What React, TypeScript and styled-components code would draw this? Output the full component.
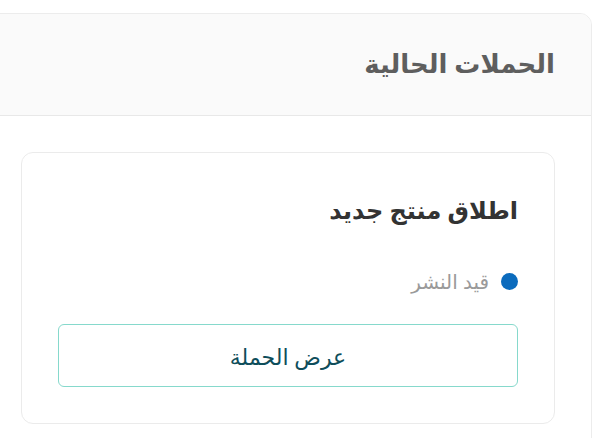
import React from "react";
import styled, { createGlobalStyle } from "styled-components";

const Global = createGlobalStyle`
  html, body { margin: 0; padding: 0; background: #ffffff; }
  body {
    direction: rtl;
    font-family: "Noto Sans", "DejaVu Sans", sans-serif;
    overflow: hidden;
  }
`;

const Page = styled.div`
  width: 604px;
  height: 438px;
  overflow: hidden;
  padding-top: 13px;
  box-sizing: border-box;
  display: flex;
  justify-content: flex-start;
`;

const Panel = styled.section`
  flex: 0 0 700px;
  margin-right: 12px;
  border: 1px solid #ececec;
  border-radius: 12px;
  background: #ffffff;
  height: 600px;
  overflow: hidden;
`;

const PanelHeader = styled.header`
  height: 101px;
  background: #fafafa;
  border-bottom: 1px solid #e8e8e8;
  display: flex;
  align-items: center;
  padding-right: 36px;
`;

const PanelTitle = styled.h2`
  margin: 0 0 4px;
  font-size: 26px;
  font-weight: 700;
  color: #5e5e5e;
`;

const Body = styled.div`
  padding: 36px 36px 0 0;
  display: flex;
`;

const Card = styled.article`
  width: 534px;
  height: 272px;
  box-sizing: border-box;
  border: 1px solid #ebebeb;
  border-radius: 12px;
  padding: 36px 36px 0;
  display: flex;
  flex-direction: column;
`;

const CardTitle = styled.h3`
  margin: 0;
  font-size: 24px;
  font-weight: 700;
  color: #333333;
  line-height: 42px;
`;

const Status = styled.div`
  display: flex;
  align-items: center;
  gap: 12px;
  margin-top: 38px;
  height: 24px;
`;

const Dot = styled.span<{ $color: string }>`
  width: 17px;
  height: 17px;
  border-radius: 50%;
  background: ${(p) => p.$color};
  flex: 0 0 auto;
`;

const StatusText = styled.span`
  font-size: 20px;
  color: #9a9a9a;
`;

const ViewButton = styled.button`
  margin-top: 31px;
  height: 63px;
  width: 100%;
  border: 1px solid #86d9cc;
  border-radius: 6px;
  background: #ffffff;
  color: #0e4d5a;
  font-family: inherit;
  font-size: 22px;
  cursor: pointer;
`;

export default function App() {
  return (
    <>
      <Global />
      <Page>
        <Panel>
          <PanelHeader>
            <PanelTitle>الحملات الحالية</PanelTitle>
          </PanelHeader>
          <Body>
            <Card>
              <CardTitle>اطلاق منتج جديد</CardTitle>
              <Status>
                <Dot $color="#0b6bbd" />
                <StatusText>قيد النشر</StatusText>
              </Status>
              <ViewButton>عرض الحملة</ViewButton>
            </Card>
          </Body>
        </Panel>
      </Page>
    </>
  );
}
